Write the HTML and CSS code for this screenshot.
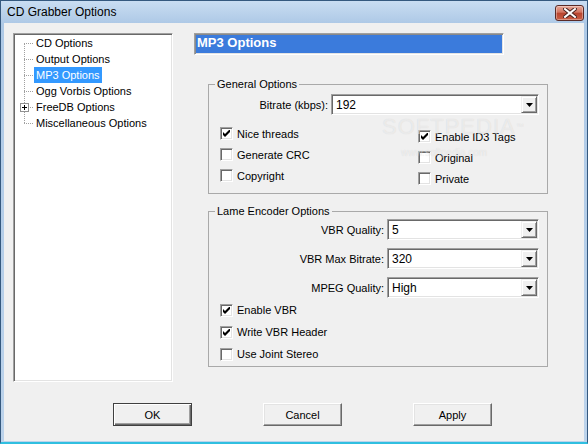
FILE: index.html
```html
<!DOCTYPE html>
<html lang="en">
<head>
  <meta charset="UTF-8" />
  <title>CD Grabber Options</title>
  <link rel="stylesheet" href="styles.css">
</head>
<body>

<div class="window">
  <div class="titlebar">
    <span class="title">CD Grabber Options</span>
    <button class="close-btn">
      <svg width="14" height="10" viewBox="0 0 14 10">
        <path d="M2 1 L12 9 M12 1 L2 9" stroke="#4a2420" stroke-width="4" stroke-linecap="square"/>
        <path d="M2 1 L12 9 M12 1 L2 9" stroke="#fff" stroke-width="2" stroke-linecap="square"/>
      </svg>
    </button>
  </div>

  <div class="client">
    <div class="main">
      <ul class="tree">
        <li class="tree-item"><span class="node">CD Options</span></li>
        <li class="tree-item"><span class="node">Output Options</span></li>
        <li class="tree-item"><span class="node selected">MP3 Options</span></li>
        <li class="tree-item"><span class="node">Ogg Vorbis Options</span></li>
        <li class="tree-item"><span class="expander"></span><span class="node">FreeDB Options</span></li>
        <li class="tree-item"><span class="node">Miscellaneous Options</span></li>
      </ul>

      <div class="page">
        <div class="page-header">MP3 Options</div>

        <fieldset class="group">
          <legend>General Options</legend>
          <div class="group-body general">
            <div class="field-row">
              <label>Bitrate (kbps):</label>
              <div class="combo wide">
                <span class="combo-value">192</span>
                <span class="combo-btn"><svg width="7" height="4" viewBox="0 0 7 4"><polygon points="0,0 7,0 3.5,4" fill="#000"/></svg></span>
              </div>
            </div>
            <div class="check-cols">
              <div class="check-col">
                <div class="check-row"><span class="check on"><svg width="7" height="7" viewBox="0 0 7 7"><polygon points="0,2 2,4 6,0 7,0 7,2 2,7 0,5" fill="#000"/></svg></span>Nice threads</div>
                <div class="check-row"><span class="check"></span>Generate CRC</div>
                <div class="check-row"><span class="check"></span>Copyright</div>
              </div>
              <div class="check-col right">
                <div class="check-row"><span class="check on"><svg width="7" height="7" viewBox="0 0 7 7"><polygon points="0,2 2,4 6,0 7,0 7,2 2,7 0,5" fill="#000"/></svg></span>Enable ID3 Tags</div>
                <div class="check-row"><span class="check"></span>Original</div>
                <div class="check-row"><span class="check"></span>Private</div>
              </div>
            </div>
          </div>
        </fieldset>

        <fieldset class="group lame">
          <legend>Lame Encoder Options</legend>
          <div class="group-body">
            <div class="field-row">
              <label>VBR Quality:</label>
              <div class="combo">
                <span class="combo-value">5</span>
                <span class="combo-btn"><svg width="7" height="4" viewBox="0 0 7 4"><polygon points="0,0 7,0 3.5,4" fill="#000"/></svg></span>
              </div>
            </div>
            <div class="field-row">
              <label>VBR Max Bitrate:</label>
              <div class="combo">
                <span class="combo-value">320</span>
                <span class="combo-btn"><svg width="7" height="4" viewBox="0 0 7 4"><polygon points="0,0 7,0 3.5,4" fill="#000"/></svg></span>
              </div>
            </div>
            <div class="field-row">
              <label>MPEG Quality:</label>
              <div class="combo">
                <span class="combo-value">High</span>
                <span class="combo-btn"><svg width="7" height="4" viewBox="0 0 7 4"><polygon points="0,0 7,0 3.5,4" fill="#000"/></svg></span>
              </div>
            </div>
            <div class="lame-checks">
              <div class="check-row"><span class="check on"><svg width="7" height="7" viewBox="0 0 7 7"><polygon points="0,2 2,4 6,0 7,0 7,2 2,7 0,5" fill="#000"/></svg></span>Enable VBR</div>
              <div class="check-row"><span class="check on"><svg width="7" height="7" viewBox="0 0 7 7"><polygon points="0,2 2,4 6,0 7,0 7,2 2,7 0,5" fill="#000"/></svg></span>Write VBR Header</div>
              <div class="check-row"><span class="check"></span>Use Joint Stereo</div>
            </div>
          </div>
        </fieldset>
      </div>
    </div>

    <div class="buttons">
      <button class="btn default">OK</button>
      <button class="btn">Cancel</button>
      <button class="btn">Apply</button>
    </div>
  </div>

  <div class="watermark">SOFTPEDIA<sup>™</sup></div>
  <div class="watermark-url">www.softpedia.com</div>
</div>

</body>
</html>
```

FILE: styles.css
```css
* {
  box-sizing: border-box;
}

body {
  margin: 0;
  font-family: "Liberation Sans", Arial, sans-serif;
  font-size: 11px;
  color: #000;
}

.window {
  position: relative;
  width: 588px;
  height: 444px;
  display: flex;
  flex-direction: column;
  padding: 0 3px 1px;
  border: 1px solid #35597f;
  border-bottom: 2px solid #30bfe0;
  background: linear-gradient(#c9ddf2, #aec9e6 22px, #bcd3eb);
}

.titlebar {
  height: 22px;
  display: flex;
  align-items: center;
  justify-content: space-between;
  padding-left: 3px;
}

.title {
  font-size: 12px;
}

.close-btn {
  width: 29px;
  height: 16px;
  margin-top: 1px;
  padding: 0;
  display: flex;
  align-items: center;
  justify-content: center;
  border: 1px solid #5a2a26;
  border-radius: 3px;
  background: linear-gradient(#e7a797 0%, #d27561 45%, #b8442e 50%, #c95e45 100%);
  box-shadow: inset 0 0 0 1px rgba(255, 255, 255, 0.35);
}

.client {
  flex: 1;
  display: flex;
  flex-direction: column;
  padding: 10px 0 0 9px;
  background-color: #f0f0f0;
}

.main {
  display: flex;
  gap: 21px;
  height: 349px;
}

/* tree on the left */

.tree {
  position: relative;
  flex-shrink: 0;
  width: 160px;
  height: 349px;
  margin: 0;
  padding: 1px 0 0 0;
  list-style: none;
  white-space: nowrap;
  background-color: #fff;
  border: 1px solid;
  border-color: #a0a0a0 #fff #fff #a0a0a0;
  box-shadow: inset 1px 1px 0 #696969, inset -1px -1px 0 #e3e3e3;
}

.tree::before {
  content: '';
  position: absolute;
  left: 10px;
  top: 9px;
  height: 80px;
  border-left: 1px dotted #a0a0a0;
}

.tree-item {
  position: relative;
  height: 16px;
  padding-left: 20px;
  line-height: 16px;
}

.tree-item::before {
  content: '';
  position: absolute;
  left: 10px;
  top: 8px;
  width: 9px;
  border-top: 1px dotted #a0a0a0;
}

.node {
  display: inline-block;
  padding: 0 2px;
  height: 16px;
}

.node.selected {
  background-color: #3399ff;
  color: #fff;
}

.expander {
  position: absolute;
  z-index: 1;
  left: 6px;
  top: 4px;
  width: 9px;
  height: 9px;
  border: 1px solid #919191;
  background-color: #fff;
}

.expander::before,
.expander::after {
  content: '';
  position: absolute;
  background-color: #000;
}

.expander::before {
  left: 1px;
  top: 3px;
  width: 5px;
  height: 1px;
}

.expander::after {
  left: 3px;
  top: 1px;
  width: 1px;
  height: 5px;
}

/* page on the right */

.page {
  display: flex;
  flex-direction: column;
  align-items: flex-start;
}

.page-header {
  width: 310px;
  height: 22px;
  padding-left: 2px;
  font-size: 13px;
  font-weight: bold;
  line-height: 18px;
  color: #fff;
  background-color: #3b7bdc;
  border: 1px solid;
  border-color: #a0a0a0 #fff #fff #a0a0a0;
  box-shadow: inset 1px 1px 0 #8a8a8a, inset -1px -1px 0 #e3e3e3;
}

.group {
  width: 340px;
  min-width: 0;
  margin: 22px 0 0 14px;
  padding: 0;
  border: 1px solid #a9a9a9;
}

.group.lame {
  margin-top: 10px;
}

.group legend {
  margin-left: 6px;
  padding: 0 2px;
  line-height: 14px;
}

.group-body {
  padding: 1px 8px 1px 11px;
}

.group-body.general {
  padding-top: 3px;
  padding-bottom: 4px;
}

.field-row {
  display: flex;
  align-items: center;
  justify-content: flex-end;
  height: 21px;
  margin-bottom: 8px;
}

.field-row label {
  margin-right: 3px;
}

.combo {
  width: 152px;
  height: 21px;
  display: flex;
  align-items: center;
  justify-content: space-between;
  padding: 1px;
  background-color: #fff;
  border: 1px solid;
  border-color: #a0a0a0 #fff #fff #a0a0a0;
  box-shadow: inset 1px 1px 0 #696969, inset -1px -1px 0 #e3e3e3;
}

.combo.wide {
  width: 208px;
}

.combo-value {
  padding-left: 3px;
  font-size: 12px;
}

.combo-btn {
  width: 16px;
  height: 17px;
  display: flex;
  align-items: center;
  justify-content: center;
  background-color: #f0f0f0;
  border: 1px solid;
  border-color: #f0f0f0 #696969 #696969 #f0f0f0;
  box-shadow: inset 1px 1px 0 #fff, inset -1px -1px 0 #a0a0a0;
}

.check-cols {
  display: flex;
}

.check-col {
  width: 198px;
}

.check-col.right {
  width: auto;
  margin-top: 3px;
}

.check-row {
  display: flex;
  align-items: center;
  gap: 4px;
  height: 21px;
}

.lame-checks {
  margin-top: -7px;
}

.lame-checks .check-row {
  height: 22px;
}

.check {
  width: 13px;
  height: 13px;
  display: flex;
  align-items: center;
  justify-content: center;
  background-color: #fff;
  border: 1px solid;
  border-color: #a0a0a0 #fff #fff #a0a0a0;
  box-shadow: inset 1px 1px 0 #696969, inset -1px -1px 0 #e3e3e3;
}

/* bottom buttons */

.buttons {
  display: flex;
  gap: 71px;
  margin-top: 21px;
  padding-left: 100px;
}

.btn {
  width: 79px;
  height: 23px;
  padding: 0;
  font-family: "Liberation Sans", Arial, sans-serif;
  font-size: 11px;
  color: #000;
  background-color: #f0f0f0;
  border: 1px solid;
  border-color: #fff #696969 #696969 #fff;
  box-shadow: inset -1px -1px 0 #a0a0a0, inset 1px 1px 0 #e3e3e3;
}

.btn.default {
  border-color: #404040;
  box-shadow: inset 1px 1px 0 #fff, inset -1px -1px 0 #696969, inset -2px -2px 0 #a0a0a0;
}

/* watermark over the picture */

.watermark,
.watermark-url {
  position: absolute;
  pointer-events: none;
  color: rgba(255, 255, 255, 0.5);
  text-shadow: 0 0 1px rgba(0, 0, 0, 0.12);
}

.watermark {
  left: 381px;
  top: 115px;
  font-size: 22px;
  line-height: 22px;
  letter-spacing: 1px;
}

.watermark sup {
  font-size: 8px;
  vertical-align: top;
}

.watermark-url {
  left: 400px;
  top: 146px;
  font-size: 10px;
  line-height: 12px;
}
```
